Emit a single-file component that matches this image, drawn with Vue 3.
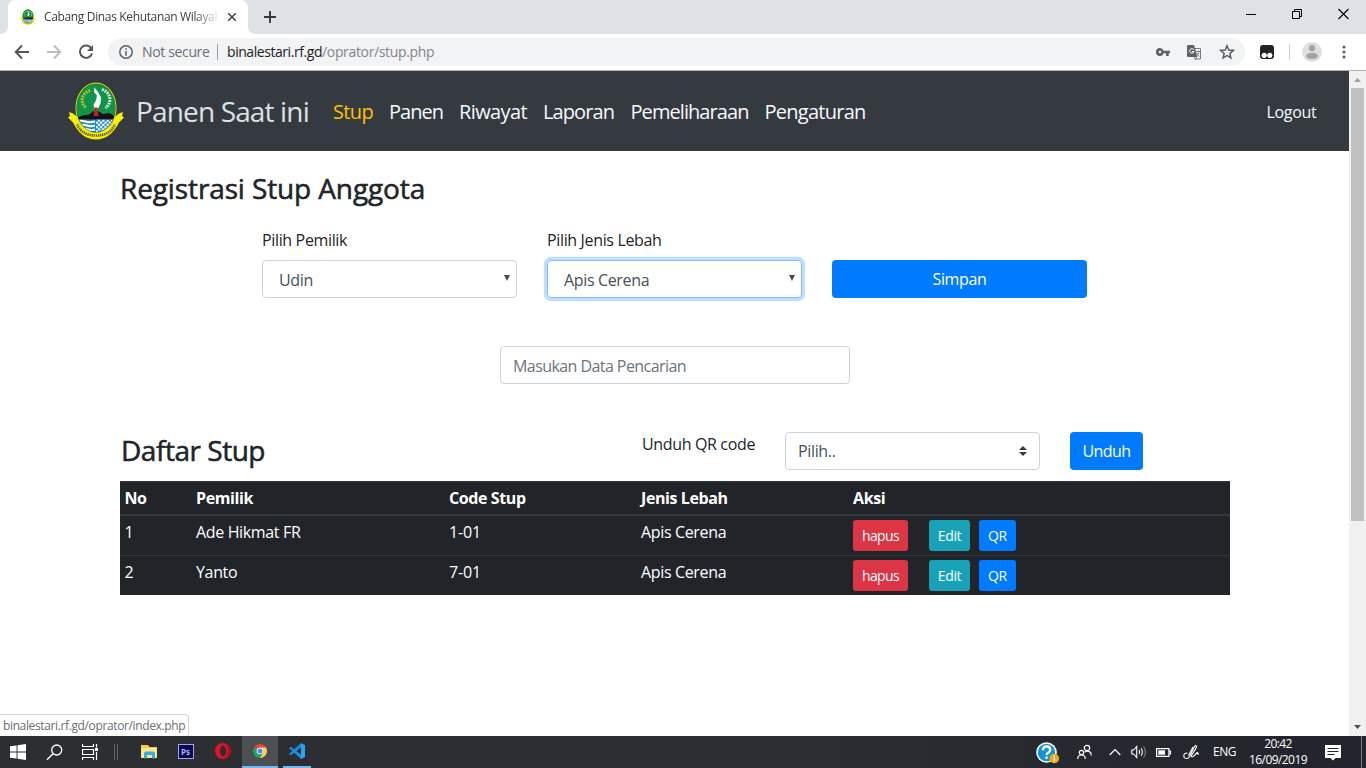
<script setup>
const menu = [
  { label: 'Stup', cls: 'm-stup active' },
  { label: 'Panen', cls: 'm-panen' },
  { label: 'Riwayat', cls: 'm-riwayat' },
  { label: 'Laporan', cls: 'm-laporan' },
  { label: 'Pemeliharaan', cls: 'm-pem' },
  { label: 'Pengaturan', cls: 'm-peng' },
]
const stups = [
  { no: 1, pemilik: 'Ade Hikmat FR', code: '1-01', jenis: 'Apis Cerena' },
  { no: 2, pemilik: 'Yanto', code: '7-01', jenis: 'Apis Cerena' },
]
</script>

<template>
  <div class="window">
    <header class="tabstrip">
      <svg class="tab-shape" width="264" height="34" viewBox="0 0 264 34"><path d="M0 34c5 0 8-3 8-8V8c0-5 3-8 8-8h224c5 0 8 3 8 8v18c0 5 3 8 8 8z" fill="#fff" /></svg>
      <div class="tab">
        <svg width="16" height="16" viewBox="0 0 58 58"><use href="#crest" /></svg>
        <span class="tab-title">Cabang Dinas Kehutanan Wilayah</span>
        <svg class="tab-close" width="10" height="10" viewBox="0 0 10 10"><path d="M1.2 1.2l7.6 7.6M8.800 1.200L1.200 8.800" stroke="#45494d" stroke-width="1.600" /></svg>
      </div>
      <svg class="new-tab" width="14" height="14" viewBox="0 0 14 14"><path d="M7 1v12M1 7h12" stroke="#35383c" stroke-width="1.900" /></svg>
      <div class="win-controls">
        <svg width="10" height="12" viewBox="0 0 10 12"><path d="M0 6.500h10" stroke="#000" /></svg>
        <svg width="10" height="12" viewBox="0 0 10 12"><path d="M.5 3.500h7v7h-7zM2.500 3.500v-2h7v7h-2" fill="none" stroke="#000" /></svg>
        <svg width="11" height="12" viewBox="0 0 11 12"><path d="M.5 1l10 10M10.500 1L.5 11" stroke="#000" stroke-width="1.100" /></svg>
      </div>
    </header>

    <div class="toolbar">
      <div class="nav-icons">
        <svg width="16" height="16" viewBox="0 0 16 16"><path d="M15 8H2M8 1.500L1.700 8 8 14.500" fill="none" stroke="#54585d" stroke-width="1.900" /></svg>
        <svg width="16" height="16" viewBox="0 0 16 16"><path d="M1 8h13M8 1.500L14.300 8 8 14.500" fill="none" stroke="#babcbe" stroke-width="1.900" /></svg>
        <svg width="16" height="16" viewBox="0 0 16 16"><path d="M13.300 4.300A6.200 6.200 0 1 0 14 9.500" fill="none" stroke="#54585d" stroke-width="2" /><path d="M15 1v6H9z" fill="#54585d" /></svg>
      </div>
      <div class="omnibox">
        <svg width="14" height="14" viewBox="0 0 14 14"><circle cx="7" cy="7" r="6.200" fill="none" stroke="#5f6368" stroke-width="1.500" /><path d="M7 3.200v1.600M7 6v4.700" stroke="#5f6368" stroke-width="1.600" /></svg>
        <span class="not-secure">Not secure</span>
        <i class="sep"></i>
        <span class="url"><b>binalestari.rf.gd</b><span>/oprator/stup.php</span></span>
        <svg class="i-key" width="14" height="8" viewBox="0 0 14 8"><path d="M4 0a4 4 0 1 0 3.700 5.300H10V8h2.700V5.300H14V2.700H7.700A4 4 0 0 0 4 0zm0 2.700a1.300 1.300 0 1 1 0 2.600 1.300 1.300 0 0 1 0-2.600z" fill="#5f6368" /></svg>
        <svg class="i-tr" width="15" height="15" viewBox="0 0 15 15"><path d="M7.500 3.500h6v10.500H7.500" fill="#f5f6f7" stroke="#777b80" /><path d="M1 0h6l3.500 12H1.200Q0 12 0 10.800V1Q0 0 1 0z" fill="#5f6368" /><path d="M6.700 4.600A2.200 2.200 0 1 0 7 6.500H5" fill="none" stroke="#fff" /><path d="M9 6.500h4M11 5.500v1M12.300 6.500c-.5 2-1.300 3-2.500 4M9.700 8l2.800 3.500M7 12l1.500 2.500L10 12" fill="none" stroke="#777b80" stroke-width=".9" /></svg>
        <svg class="i-star" width="16" height="16" viewBox="0 0 16 16"><path d="M8 1.800l1.750 4.200 4.600.4-3.500 3 1.050 4.500L8 11.500l-3.900 2.400 1.050-4.500-3.500-3 4.600-.4z" fill="none" stroke="#54585d" stroke-width="1.400" /></svg>
      </div>
      <svg class="i-ext" width="14" height="14" viewBox="0 0 14 14"><rect width="14" height="14" rx="3" fill="#232323" /><circle cx="4.200" cy="10.300" r="2.600" fill="#fff" /><circle cx="9.800" cy="10.300" r="2.600" fill="#fff" /></svg>
      <i class="tb-sep"></i>
      <svg class="i-user" width="20" height="20" viewBox="0 0 20 20"><circle cx="10" cy="10" r="10" fill="#dfdfdf" /><circle cx="10" cy="6.200" r="3.100" fill="#a3a3a3" /><ellipse cx="10" cy="13.900" rx="6" ry="3.200" fill="#a3a3a3" /></svg>
      <svg class="i-dots" width="4" height="14" viewBox="0 0 4 14"><g fill="#5f6368"><circle cx="2" cy="2" r="1.600" /><circle cx="2" cy="7" r="1.600" /><circle cx="2" cy="12" r="1.600" /></g></svg>
    </div>

    <div class="viewport">
      <main class="page">
        <nav class="navbar">
          <svg class="crest" width="58" height="58" viewBox="0 0 58 58">
            <defs>
              <clipPath id="oval"><ellipse cx="29" cy="26" rx="19.200" ry="24" /></clipPath>
              <pattern id="check" width="4.400" height="4.400" patternUnits="userSpaceOnUse"><rect width="4.400" height="4.400" fill="#fff" /><path d="M0 0h2.200v2.200H0zM2.200 2.200h2.200v2.200H2.200z" fill="#1b87cf" /></pattern>
            </defs>
            <g id="crest">
              <path d="M2 30l4 1.500 4 3c2 10 10 15 19 15s17-5 19-15l4-3 4-1.500-1 4 2 1.500-5 5C47 51 39 57.500 29 57.500S11 51 6 40.500l-5-5L3 34z" fill="#f5ee12" />
              <ellipse cx="29" cy="26" rx="20.500" ry="25.500" fill="#f5ee12" />
              <ellipse cx="29" cy="26" rx="19.600" ry="24.500" fill="#0b5b30" />
              <g clip-path="url(#oval)">
                <rect x="9" y="0" width="40" height="37" fill="#119447" />
                <path d="M9 35.500l7-2 6-1 4-3h6l4 2.500 6-1 8 4.500v3H9z" fill="#171214" />
                <rect x="9" y="37.500" width="20" height="17" fill="#2389cf" />
                <path d="M9 39.500q5-1.500 9 0t10 0M11 43.500q5-1.500 9 0t8 0M14 47.500q4-1.500 7 0t7 0" fill="none" stroke="#fff" stroke-width="2" />
                <rect x="29" y="37.500" width="20" height="17" fill="url(#check)" />
              </g>
              <path d="M27.500 5.500l-.5 4.500 3 3.500-1 5-2.500 4 1 5h3l3-6 .5-6-3-5.500z" fill="#fff" />
              <path d="M27.500 25.500h3l1 8.500h-5z" fill="#b3262b" />
              <path d="M23 8.500c-9 3-10.500 13-3.500 17.500" fill="none" stroke="#b9bd2c" stroke-width="3" stroke-dasharray="1.800 1" />
              <path d="M35 7.500c9 3 10.500 13 3.500 18.500" fill="none" stroke="#e4f0e4" stroke-width="3" stroke-dasharray="1.800 1" />
              <path d="M10 42.500c4 8 10 11 19 11s15-3 19-11" fill="none" stroke="#5f5c10" stroke-width="2.600" stroke-dasharray="1.300 .8" />
            </g>
          </svg>
          <span class="brand">Panen Saat ini</span>
          <div class="menu"><a v-for="m in menu" :key="m.label" :class="m.cls">{{ m.label }}</a></div>
          <a class="logout">Logout</a>
        </nav>

        <div class="container">
          <h2 class="h-reg">Registrasi Stup Anggota</h2>
          <div class="form">
            <div class="field">
              <label>Pilih Pemilik</label>
              <div class="control"><span>Udin</span><svg width="6" height="6" viewBox="0 0 6 6"><path d="M0 0h6L3 6z" fill="#454c53" /></svg></div>
            </div>
            <div class="field">
              <label>Pilih Jenis Lebah</label>
              <div class="control focus"><span>Apis Cerena</span><svg width="6" height="6" viewBox="0 0 6 6"><path d="M0 0h6L3 6z" fill="#454c53" /></svg></div>
            </div>
            <button class="btn save">Simpan</button>
          </div>
          <div class="search"><span>Masukan Data Pencarian</span></div>
          <div class="list-head">
            <h2 class="h-list">Daftar Stup</h2>
            <span class="qr-label">Unduh QR code</span>
            <div class="control custom"><span>Pilih..</span><svg width="8" height="10" viewBox="0 0 8 10"><path d="M0 4l4-4 4 4zM0 6h8l-4 4z" fill="#343a40" /></svg></div>
            <button class="btn dl">Unduh</button>
          </div>
          <div class="table">
            <div class="tr th"><span>No</span><span>Pemilik</span><span>Code Stup</span><span>Jenis Lebah</span><span>Aksi</span></div>
            <div v-for="s in stups" :key="s.no" class="tr td">
              <span>{{ s.no }}</span><span>{{ s.pemilik }}</span><span class="code">{{ s.code }}</span><span>{{ s.jenis }}</span>
              <div class="actions"><button class="hapus">hapus</button><button class="edit">Edit</button><button class="qr">QR</button></div>
            </div>
          </div>
        </div>
      </main>
      <div class="scrollbar">
        <svg width="17" height="17" viewBox="0 0 17 17"><path d="M5 11l3.500-4 3.500 4z" fill="#a3a3a3" /></svg>
        <i class="thumb"></i>
        <svg width="17" height="17" viewBox="0 0 17 17"><path d="M5 6h7l-3.500 4z" fill="#505050" /></svg>
      </div>
      <div class="status">binalestari.rf.gd/oprator/index.php</div>
    </div>

    <footer class="taskbar">
      <div class="tasks">
        <span class="t36"><svg width="16" height="16" viewBox="0 0 16 16"><path d="M0 2.300l6.600-.9v6.100H0zM7.500 1.200L16 0v7.500H7.500zM0 8.500h6.600v6.100L0 13.700zM7.500 8.500H16V16l-8.500-1.200z" fill="#fff" /></svg></span>
        <span class="t36"><svg width="17" height="17" viewBox="0 0 17 17"><circle cx="10.700" cy="6" r="5" fill="none" stroke="#fff" stroke-width="1.300" /><path d="M7 9.700L1 15.700" stroke="#fff" stroke-width="1.400" /></svg></span>
        <span class="t36"><svg width="17" height="16" viewBox="0 0 17 16"><path d="M.5 0v2.500h11V0M.5 16v-2.500h11V16M.5 5.500h11v5H.5zM14.500 0v3.500M14.500 8v8" fill="none" stroke="#fff" stroke-width="1.200" /><path d="M13 4h3v3h-3z" fill="#fff" /></svg></span>
        <i class="grip"></i>
        <span class="app t36"><svg width="17" height="15" viewBox="0 0 17 15"><path d="M0 1h7l1.500 2H16v11H0z" fill="#f6c94f" /><path d="M1 4h15v10H0V4z" fill="#ffe590" /><path d="M3 14.500V9.500q0-2 2-2h7q2 0 2 2v5h-3v-3.500H6v3.500z" fill="#38aee8" /></svg></span>
        <span class="app t37 ps"><b>Ps</b></span>
        <span class="app t37"><svg width="16" height="16" viewBox="0 0 16 16"><circle cx="8" cy="8" r="8" fill="#e5132a" /><path d="M10 .3A8 8 0 0 1 10 15.700Q13 12 13 8T10 .3z" fill="#a70e1e" /><ellipse cx="8" cy="8" rx="3.100" ry="5.500" fill="#2c2e33" /></svg></span>
        <span class="app t36 chrome"><svg width="14" height="14" viewBox="0 0 14 14"><path d="M7 7L1 3.500A7 7 0 0 1 13.060 3.500z" fill="#df4b3b" /><path d="M7 7L1 3.500A7 7 0 0 0 7 14l3-5z" fill="#21a366" /><path d="M7 7l3 2-3 5A7 7 0 0 0 13.060 3.500H7z" fill="#fdd149" /><circle cx="7" cy="7" r="3.300" fill="#fff" /><circle cx="7" cy="7" r="2.500" fill="#4688f4" /></svg></span>
        <span class="app code-app"><svg width="16" height="16" viewBox="0 0 16 16"><path d="M12 0v4.500L2 12.200 0 11 12 0zM0 5l2-1.200 10 7.700V16z" fill="#168bd8" /><path d="M12 0l4 2v12l-4 2z" fill="#2aa5ee" /></svg></span>
      </div>
      <div class="tray">
        <svg class="help" width="24" height="22" viewBox="0 0 24 22"><circle cx="10.500" cy="10.500" r="10.300" fill="#fff" /><circle cx="10.500" cy="10.500" r="8.700" fill="#1593d4" /><path d="M7 8.200q0-3.700 3.600-3.700t3.600 3.200q0 1.700-1.800 2.700-1.700 1-1.700 2.600M10.600 14.500v2.300" fill="none" stroke="#fff" stroke-width="2.300" /><circle cx="18.300" cy="16.500" r="4.800" fill="#e9a820" /><path d="M18.300 13.500v1.300M18.300 15.800v3.500" stroke="#fff" stroke-width="1.300" /></svg>
        <svg class="people" width="15" height="16" viewBox="0 0 15 16"><g fill="none" stroke="#fff" stroke-width="1.200"><circle cx="10" cy="4" r="2.700" /><circle cx="4.500" cy="8.500" r="2.200" /><path d="M.7 15q0-4 3.800-4t3.800 4M7.500 8Q14 5.500 14.300 11.500" /></g></svg>
        <svg class="chev" width="12" height="8" viewBox="0 0 12 8"><path d="M.7 7L6 1.500 11.300 7" fill="none" stroke="#fff" stroke-width="1.200" /></svg>
        <svg class="vol" width="17" height="14" viewBox="0 0 17 14"><g fill="none" stroke="#fff" stroke-width="1.100"><path d="M.7 5h2l3-3.500v11L2.700 9h-2zM8 5q1.400 2 0 4M10 3.200q2.700 3.800 0 7.600" /><path d="M12.500 1.500q4 5.500 0 11" stroke="#888" /></g></svg>
        <svg class="bat" width="15" height="9" viewBox="0 0 15 9"><path d="M.6.600h12.300v7.800H.6zM13 3h1.500v3H13" fill="none" stroke="#fff" stroke-width="1.200" /><path d="M2.300 2.300H9v4.400H2.300z" fill="#fff" /></svg>
        <svg class="pen" width="17" height="16" viewBox="0 0 17 16"><path d="M4.500 9Q.8 9 .8 11.800T4 14.500q1.500 0 2.500-2L11.500 2.500q1.500-2 2 0Q13.500 4 9 10.500q-1.500 2.500.5 2.300t3.500-3.300q2.500-2 1.500.5H16M5.500 11.500L10 3" fill="none" stroke="#fff" stroke-width="1.100" /></svg>
        <span class="eng">ENG</span>
        <div class="clock"><span class="time">20:42</span><span>16/09/2019</span></div>
        <svg class="note" width="16" height="16" viewBox="0 0 16 16"><path d="M0 0h16v13h-5.500L8 15.500 5.500 13H0z" fill="#fff" /><path d="M2.500 3.500h11M2.500 6.500h11M2.500 9.500h7" stroke="#24272e" /></svg>
        <i class="peek"></i>
      </div>
    </footer>
  </div>
</template>

<style>
body { margin: 0; overflow: hidden; }
</style>

<style scoped>
* { box-sizing: border-box; }
.window { width: 1366px; height: 768px; display: flex; flex-direction: column; font-family: "Open Sans", "Noto Sans", sans-serif; font-size: 16px; line-height: 24px; letter-spacing: -.35px; color: #212529; background: #fff; white-space: nowrap; }
svg { display: block; flex: none; }
button { font: inherit; letter-spacing: inherit; border: 0; padding: 0; color: #fff; }
i { flex: none; }

.tabstrip { height: 34px; flex: none; background: #dee1e6; display: flex; align-items: center; position: relative; }
.tab-shape { position: absolute; left: 0; top: 0; }
.tab { position: relative; width: 248px; height: 34px; padding-left: 20px; display: flex; align-items: center; }
.tab-title { margin-left: 8px; width: 173px; overflow: hidden; font-size: 12px; color: #3c4043; -webkit-mask-image: linear-gradient(90deg, #000 150px, transparent 176px); mask-image: linear-gradient(90deg, #000 150px, transparent 176px); }
.tab-close { margin-left: 10px; }
.new-tab { position: relative; margin-left: 15px; }
.win-controls { margin-left: auto; margin-right: 17px; display: flex; gap: 36px; margin-bottom: 6px; }

.toolbar { height: 37px; flex: none; display: flex; align-items: center; border-bottom: 1px solid #b2b2b3; }
.nav-icons { width: 108px; padding-left: 14px; display: flex; gap: 16px; }
.omnibox { width: 1137px; height: 28px; border-radius: 14px; background: #f1f3f4; display: flex; align-items: center; padding-left: 11px; font-size: 14px; }
.not-secure { margin-left: 9px; width: 75px; color: #6b6f74; }
.sep { width: 1px; height: 16px; background: #9b9da0; }
.url { margin-left: 9px; color: #83868a; }
.url b { font-weight: 400; color: #202124; letter-spacing: -.44px; }
.i-key { margin-left: auto; margin-right: 17px; }
.i-tr { margin-right: 17px; }
.i-star { margin-right: 10px; }
.i-ext { margin-left: 15px; }
.tb-sep { width: 1px; height: 16px; background: #cfd1d3; margin: 0 12px 0 15px; }
.i-dots { margin-left: 20px; }

.viewport { height: 665px; flex: none; display: flex; position: relative; }
.page { width: 1349px; }
.navbar { height: 80px; background: #343a40; display: flex; align-items: center; padding-left: 67px; color: #f8f9fa; }
.brand { margin-left: 11px; width: 197px; font-size: 28px; letter-spacing: -.85px; color: #dde1e5; margin-bottom: 1px; }
.menu { display: flex; font-size: 20px; gap: 16px; margin-top: 2px; }
.menu .active { color: #ffc107; }
.m-stup { width: 40px; letter-spacing: -.65px; }
.m-panen { width: 54px; letter-spacing: -.98px; }
.m-riwayat { width: 68px; letter-spacing: -.61px; }
.m-laporan { width: 71.500px; letter-spacing: -.91px; }
.m-pem { width: 118px; letter-spacing: -.93px; }
.m-peng { width: 101px; letter-spacing: -.74px; }
.logout { margin-left: auto; margin-right: 32.500px; margin-top: 1px; letter-spacing: -.3px; }

.container { width: 1110px; margin-left: 120px; }
h2 { margin: 0; font-size: 28px; font-weight: 500; line-height: 34px; -webkit-text-stroke: .55px #212529; }
.h-reg { padding-top: 20px; letter-spacing: -.12px; }
.form { margin: 23px 0 0 142px; display: grid; grid-template-columns: repeat(3, 255px); gap: 30px; align-items: end; height: 70px; }
.field label { display: block; margin-bottom: 8px; height: 24px; }
.control { height: 38px; border: 1px solid #ced4da; border-radius: 4px; display: flex; align-items: center; justify-content: space-between; padding: 2px 6px 0 16px; color: #495057; }
.control svg { margin-bottom: 4px; }
.focus { border-color: #80bdff; box-shadow: 0 0 0 3.200px #bfdeff; }
.btn { height: 38px; border-radius: 4px; background: #007bff; text-align: center; }
.search { width: 350px; height: 38px; margin: 48px 0 0 380px; border: 1px solid #ced4da; border-radius: 4px; padding: 7px 12px; color: #6c757d; letter-spacing: -.57px; }
.list-head { height: 38px; margin-top: 48px; display: flex; }
.h-list { width: 522px; padding-left: 1px; padding-top: 1px; letter-spacing: -.47px; }
.qr-label { width: 143px; }
.custom { width: 255px; padding: 0 12px 0 12px; }
.custom svg { margin: 0; }
.dl { width: 73px; margin-left: 30px; letter-spacing: -.55px; }

.table { margin-top: 11px; background: #212529; color: #fff; }
.tr { display: grid; grid-template-columns: 71.500px 253px 192px 212px 1fr; padding-left: 4.500px; border-top: 1px solid #32383e; }
.th { height: 35px; padding-top: 4px; border-bottom: 2px solid #32383e; font-weight: 700; letter-spacing: -.4px; }
.td { height: 40px; padding-top: 4px; }
.td:nth-child(2) { border-top: 0; height: 39px; }
.code { letter-spacing: -.15px; }
.actions { display: flex; font-size: 14px; }
.actions button { height: 31px; border-radius: 3px; }
.hapus { width: 55px; background: #dc3545; margin-right: 21px; letter-spacing: -.6px; }
.edit { width: 41px; background: #17a2b8; margin-right: 9px; }
.qr { width: 37px; background: #007bff; }

.scrollbar { width: 17px; background: #f1f1f1; display: flex; flex-direction: column; }
.thumb { width: 13px; height: 433px; margin: 0 2px auto; background: #c1c1c1; }
.status { position: absolute; left: 0; bottom: 0; width: 189px; height: 22px; padding-left: 3px; border: 1px solid #d2d3d5; border-left: 0; border-bottom: 0; border-radius: 0 4px 0 0; background: #fff; font-size: 12px; line-height: 22px; letter-spacing: -.37px; color: #6b6e72; }

.taskbar { height: 32px; flex: none; background: linear-gradient(90deg, #2c2e32, #2b2d32 60%, #21242c); display: flex; justify-content: space-between; color: #fff; font-size: 12px; }
.tasks, .tray { display: flex; align-items: center; }
.tasks span { height: 32px; display: flex; align-items: center; justify-content: center; }
.tasks .app { height: 30px; margin-bottom: 2px; }
.t36 { width: 36px; }
.t37 { width: 37px; }
.grip { width: 4px; height: 16px; border: solid #606367; border-width: 0 1px; margin: 0 13px 0 6px; }
.tasks .ps b { width: 16px; height: 15px; border: 1px solid #9aa9ee; background: #0c0750; color: #a9b5ff; font-size: 8px; line-height: 13px; text-align: center; letter-spacing: 0; }
.tasks .chrome, .tasks .code-app { height: 32px; margin-bottom: 0; border-bottom: 2px solid #76b9ed; }
.chrome { background: #4c4f54; margin-left: 1px; }
.code-app { width: 28px; margin-left: 5px; }
.help { margin-right: 17px; margin-top: 2px; }
.people { margin-right: 17px; }
.chev { margin-right: 10px; }
.vol { margin-right: 8px; }
.bat { margin-right: 12px; margin-top: 1px; }
.pen { margin-right: 13px; }
.eng { width: 36px; letter-spacing: -.48px; }
.clock { width: 58px; display: flex; flex-direction: column; align-items: center; line-height: 16px; letter-spacing: -.57px; }
.note { margin-left: 18px; margin-top: 1px; }
.peek { width: 1px; height: 32px; background: #7b7d81; margin: 0 4px 0 20px; }
</style>
